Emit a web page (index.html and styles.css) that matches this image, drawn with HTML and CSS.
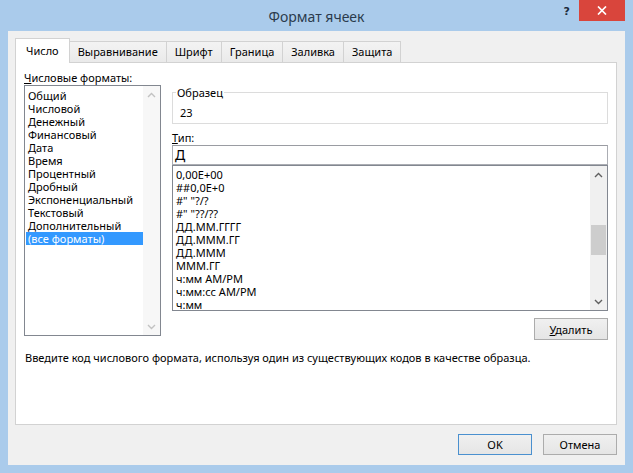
FILE: index.html
```html
<!DOCTYPE html>
<html lang="ru">
<head>
<meta charset="utf-8">
<title>Формат ячеек</title>
<link rel="stylesheet" href="styles.css">
</head>
<body>
<div class="window">
  <div class="titlebar">
    <div class="tb-spacer"></div>
    <div class="title">Формат ячеек</div>
    <div class="controls">
      <span class="help">?</span>
      <span class="close"><svg width="10" height="9" viewBox="0 0 10 9"><path d="M1 0.5 L9 8.5 M9 0.5 L1 8.5" stroke="#fff" stroke-width="1.7" fill="none"/></svg></span>
    </div>
  </div>
  <div class="client">
    <div class="tabs">
      <div class="tab active">Число</div>
      <div class="tab">Выравнивание</div>
      <div class="tab">Шрифт</div>
      <div class="tab">Граница</div>
      <div class="tab">Заливка</div>
      <div class="tab">Защита</div>
    </div>
    <div class="panel">
      <div class="col-left">
        <div class="label"><u>Ч</u>исловые форматы:</div>
        <div class="listbox cats">
          <ul class="items">
            <li>Общий</li>
            <li>Числовой</li>
            <li>Денежный</li>
            <li>Финансовый</li>
            <li>Дата</li>
            <li>Время</li>
            <li>Процентный</li>
            <li>Дробный</li>
            <li>Экспоненциальный</li>
            <li>Текстовый</li>
            <li>Дополнительный</li>
            <li class="selected">(все форматы)</li>
          </ul>
          <div class="scrollbar disabled">
            <div class="sb-btn"><svg width="9" height="6" viewBox="0 0 9 6"><path d="M1 5 L4.5 1.5 L8 5" fill="none" stroke="currentColor" stroke-width="1.4"/></svg></div>
            <div class="sb-track"></div>
            <div class="sb-btn"><svg width="9" height="6" viewBox="0 0 9 6"><path d="M1 1 L4.5 4.5 L8 1" fill="none" stroke="currentColor" stroke-width="1.4"/></svg></div>
          </div>
        </div>
      </div>
      <div class="col-right">
        <fieldset class="sample">
          <legend>Образец</legend>
          <div class="sample-value">23</div>
        </fieldset>
        <div class="label type-label"><u>Т</u>ип:</div>
        <div class="input">Д</div>
        <div class="listbox types">
          <ul class="items">
            <li>0,00E+00</li>
            <li>##0,0E+0</li>
            <li>#" "?/?</li>
            <li>#" "??/??</li>
            <li>ДД.ММ.ГГГГ</li>
            <li>ДД.МММ.ГГ</li>
            <li>ДД.МММ</li>
            <li>МММ.ГГ</li>
            <li>ч:мм AM/PM</li>
            <li>ч:мм:сс AM/PM</li>
            <li>ч:мм</li>
          </ul>
          <div class="scrollbar">
            <div class="sb-btn"><svg width="9" height="6" viewBox="0 0 9 6"><path d="M1 5 L4.5 1.5 L8 5" fill="none" stroke="currentColor" stroke-width="1.4"/></svg></div>
            <div class="sb-track"><div class="sb-thumb"></div></div>
            <div class="sb-btn"><svg width="9" height="6" viewBox="0 0 9 6"><path d="M1 1 L4.5 4.5 L8 1" fill="none" stroke="currentColor" stroke-width="1.4"/></svg></div>
          </div>
        </div>
        <div class="actions">
          <button class="btn delete"><u>У</u>далить</button>
        </div>
      </div>
      <div class="hint">Введите код числового формата, используя один из существующих кодов в качестве образца.</div>
    </div>
    <div class="footer">
      <button class="btn default">OK</button>
      <button class="btn">Отмена</button>
    </div>
  </div>
</div>
</body>
</html>
```

FILE: styles.css
```css
html, body {
  margin: 0;
  padding: 0;
}

body {
  font-family: "Noto Sans", "DejaVu Sans", sans-serif;
  font-size: 11px;
  color: #000;
  background: #aacbeb;
}

.window {
  width: 633px;
  height: 473px;
  box-sizing: border-box;
  background: #aacbeb;
  padding: 0 8px 8px;
  display: flex;
  flex-direction: column;
}

.titlebar {
  flex: none;
  height: 31px;
  display: grid;
  grid-template-columns: 1fr auto 1fr;
}

.title {
  font-size: 14px;
  line-height: 20px;
  padding-top: 7px;
  color: #2b3b4d;
}

.controls {
  justify-self: end;
  display: flex;
  align-items: flex-start;
}

.help {
  font-family: "DejaVu Sans", sans-serif;
  font-weight: bold;
  font-size: 11px;
  line-height: 12px;
  margin: 6px 9px 0 0;
  color: #1c2b3c;
}

.close {
  width: 46px;
  height: 21px;
  background: #d9453c;
  display: flex;
  align-items: center;
  justify-content: center;
}

.client {
  flex: 1;
  background: #f0f0f0;
  padding: 7px 8px 10px 7px;
  display: flex;
  flex-direction: column;
}

.tabs {
  flex: none;
  height: 24px;
  display: flex;
  align-items: flex-end;
}

.tab {
  height: 21px;
  box-sizing: border-box;
  padding: 0 8px;
  border: 1px solid #d2d2d2;
  border-bottom: none;
  margin-right: -1px;
  background: linear-gradient(#f3f3f3, #eaeaea);
  line-height: 20px;
  white-space: nowrap;
}

.tab.active {
  height: 25px;
  margin-bottom: -1px;
  background: #fff;
  position: relative;
  z-index: 1;
  line-height: 24px;
  padding: 0 10px;
}

.panel {
  flex: 1;
  background: #fff;
  border: 1px solid #d2d2d2;
  display: grid;
  grid-template-columns: 137px 436px;
  column-gap: 11px;
  align-content: start;
  padding: 7px 0 0 8px;
}

.label {
  line-height: 15px;
  white-space: nowrap;
}

.listbox {
  box-sizing: border-box;
  border: 1px solid #828790;
  display: flex;
  overflow: hidden;
}

.listbox.cats {
  height: 251px;
}

.items {
  list-style: none;
  margin: 0;
  padding: 3px 0 0 1px;
  flex: 1;
  overflow: hidden;
}

.items li {
  line-height: 13px;
  height: 13px;
  padding-left: 2px;
  white-space: nowrap;
}

.items li.selected {
  background: #3399ff;
  color: #fff;
}

.scrollbar {
  flex: none;
  width: 17px;
  display: flex;
  flex-direction: column;
  background: #f0f0f0;
  color: #606060;
}

.scrollbar.disabled {
  background: #f7f7f7;
  color: #c2c2c2;
}

.sb-btn {
  height: 17px;
  display: flex;
  align-items: center;
  justify-content: center;
}

.sb-track {
  flex: 1;
  padding-top: 42px;
}

.sb-thumb {
  height: 30px;
  background: #cdcdcd;
  margin: 0 1px;
}

.col-right {
  display: flex;
  flex-direction: column;
}

.sample {
  margin: 15px 0 0;
  border: 1px solid #dcdcdc;
  padding: 5px 7px 3px;
  min-width: 0;
}

.sample legend {
  margin-left: -4px;
  padding: 0 1px;
  line-height: 15px;
}

.sample-value {
  line-height: 15px;
}

.type-label {
  margin-top: 6px;
}

.input {
  height: 20px;
  box-sizing: border-box;
  border: 1px solid #abadb3;
  border-top-color: #9a9ca2;
  font-size: 14px;
  line-height: 18px;
  padding-left: 2px;
}

.listbox.types {
  height: 146px;
}

.listbox.types .items {
  padding-top: 2px;
}

.actions {
  display: flex;
  justify-content: flex-end;
  margin-top: 7px;
}

.btn {
  font-family: "Noto Sans", "DejaVu Sans", sans-serif;
  font-size: 11px;
  color: #000;
  background: linear-gradient(#f0f0f0, #e5e5e5);
  border: 1px solid #acacac;
  height: 21px;
  width: 74px;
  padding: 0;
  margin: 0;
  line-height: 19px;
}

.btn.delete {
  height: 22px;
}

.btn.default {
  border-color: #4a90cf;
}

.hint {
  grid-column: 1 / -1;
  margin-top: 10px;
  line-height: 15px;
  padding-left: 1px;
}

.footer {
  flex: none;
  display: flex;
  justify-content: flex-end;
  gap: 11px;
  margin-top: 9px;
}
```
